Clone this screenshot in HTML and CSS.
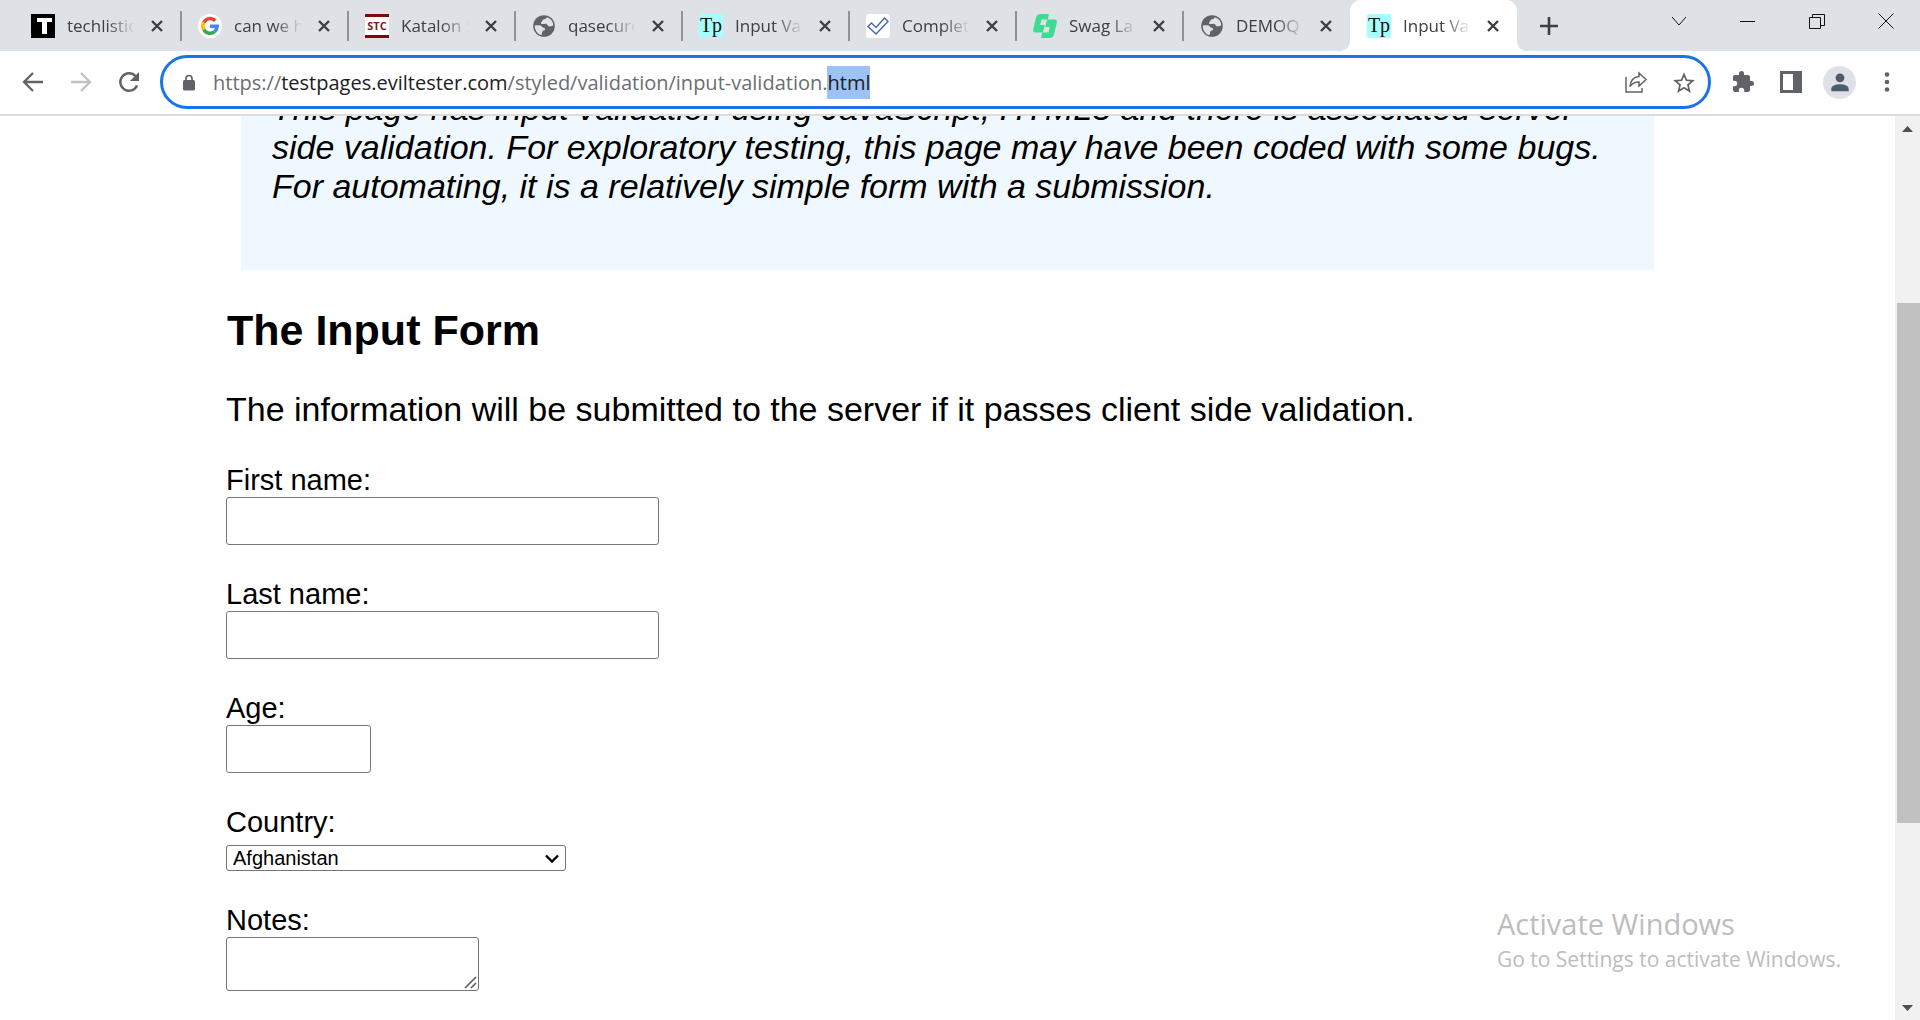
FILE: index.html
```html
<!DOCTYPE html>
<html lang="en">
<head>
<meta charset="utf-8">
<title>Input Validation</title>
<link rel="stylesheet" href="styles.css">
</head>
<body>
<svg class="defs" aria-hidden="true">
  <symbol id="x" viewBox="0 0 12 12"><path d="M1 1l10 10M11 1L1 11" fill="none" stroke="#3c4043" stroke-width="2.4"/></symbol>
  <symbol id="globe" viewBox="0 0 24 24"><circle cx="12" cy="12" r="10.8" fill="#5f6368"/><path d="M2.8 11.4C6 11 9.300 11 9.800 12.400c.5 1.500 3.300.8 3.400 2.700.1 1.800-2.900 1.300-3.100 3.300-.1 1.200-.2 1.900-.6 2.700C5.500 20.200 2.600 16.300 2.800 11.400zM14.700 3.200c-.3 1.700-1.400 1.700-2.900 2-1.500.4-1.300 1.900-2.300 2.800-1 .8-.5 2.200 1 2.100 1.700-.1 2.700-.9 4-.1 1.200.8 1.600 2.600 3.500 2.500 1.300-.1 2-.9 3.200-.9.3-4-2.600-7.300-6.500-8.400z" fill="#dee1e6"/></symbol>
</svg>

<header class="browser">
  <div class="tabstrip">
    <nav class="tabs" aria-label="Tabs">
      <div class="tab"><svg class="fav" viewBox="0 0 24 24"><path fill="#000" d="M0 0h24v24H0z"/><path fill="#fff" d="M6 4h15v4h-5v12h-5V8H6z"/></svg><a href="#" class="tab-title">techlistic</a><button class="close" aria-label="Close tab"><svg><use href="#x"/></svg></button></div>
      <div class="tab"><svg class="fav" viewBox="0 0 24 24"><circle cx="12" cy="12" r="12" fill="#fff"/><g fill="none" stroke-width="3.500"><path stroke="#ea4335" d="M17.300 6.700A7.200 7.200 0 0 0 5.800 8.400"/><path stroke="#fbbc05" d="M5.800 8.400a7.200 7.200 0 0 0 0 7.200"/><path stroke="#34a853" d="M5.800 15.600a7.200 7.200 0 0 0 10.900 2"/><path stroke="#4285f4" d="M16.700 17.600a7.200 7.200 0 0 0 2.500-5.300H12"/></g></svg><a href="#" class="tab-title">can we ha</a><button class="close" aria-label="Close tab"><svg><use href="#x"/></svg></button></div>
      <div class="tab"><span class="fav stc">STC</span><a href="#" class="tab-title">Katalon S</a><button class="close" aria-label="Close tab"><svg><use href="#x"/></svg></button></div>
      <div class="tab"><svg class="fav"><use href="#globe"/></svg><a href="#" class="tab-title">qasecure</a><button class="close" aria-label="Close tab"><svg><use href="#x"/></svg></button></div>
      <div class="tab"><span class="fav tp">Tp</span><a href="#" class="tab-title">Input Va</a><button class="close" aria-label="Close tab"><svg><use href="#x"/></svg></button></div>
      <div class="tab"><svg class="fav" viewBox="0 0 24 24"><rect width="24" height="24" rx="3" fill="#fff"/><path d="M2 12.500l3.500-3.500 4.500 4.500L18.500 4 22 7.500 10 20z" fill="none" stroke="#3f68b5" stroke-width="1.400"/></svg><a href="#" class="tab-title">Complet</a><button class="close" aria-label="Close tab"><svg><use href="#x"/></svg></button></div>
      <div class="tab"><svg class="fav" viewBox="0 0 24 24"><path fill="#3ddc91" d="M7.500 0H16l-1.300 5.500H8.500L7.200 11h4.500l-1 4.500-1.200 3H2.200Q-.5 18.500.2 15.500L3 3.500Q4 0 7.500 0zM16.500 24H8l1.300-5.500h6.200l1.300-5.500h-4.500l1-4.500 1.200-3h7.300q2.700 0 2 3L21 20.500Q20 24 16.500 24z"/></svg><a href="#" class="tab-title">Swag La</a><button class="close" aria-label="Close tab"><svg><use href="#x"/></svg></button></div>
      <div class="tab"><svg class="fav"><use href="#globe"/></svg><a href="#" class="tab-title">DEMOQ</a><button class="close" aria-label="Close tab"><svg><use href="#x"/></svg></button></div>
      <div class="tab active"><span class="fav tp">Tp</span><a href="#" class="tab-title">Input Va</a><button class="close" aria-label="Close tab"><svg><use href="#x"/></svg></button></div>
    </nav>
    <button class="newtab" aria-label="New tab"><svg viewBox="0 0 18 18"><path d="M9 0v18M0 9h18" stroke="#3c4043" stroke-width="2.600"/></svg></button>
    <div class="window-controls">
      <button aria-label="Search tabs"><svg viewBox="0 0 16 16"><path d="M1 4l7 8 7-8"/></svg></button>
      <button aria-label="Minimize"><svg viewBox="0 0 16 16"><path d="M0 8.500h15"/></svg></button>
      <button aria-label="Restore"><svg viewBox="0 0 16 16"><path d="M.5 4.500h11v11H.5zM3.500 4.500v-3h12v11h-4"/></svg></button>
      <button aria-label="Close"><svg viewBox="0 0 16 16"><path d="M.5.5l15 15M15.500.5l-15 15"/></svg></button>
    </div>
  </div>

  <div class="toolbar">
    <div class="nav-buttons">
      <button aria-label="Back"><svg viewBox="0 0 24 24"><path d="M22 12H3M12 3l-9 9 9 9" fill="none" stroke="#5f6368" stroke-width="2.300"/></svg></button>
      <button aria-label="Forward"><svg viewBox="0 0 24 24"><path d="M2 12h19M12 3l9 9-9 9" fill="none" stroke="#bdc1c6" stroke-width="2.300"/></svg></button>
      <button aria-label="Reload"><svg viewBox="0 0 24 24"><path d="M20 15.500A8.700 8.700 0 1 1 18.500 6.200" fill="none" stroke="#5f6368" stroke-width="2.400"/><path d="M22 2v9h-9z" fill="#5f6368"/></svg></button>
    </div>
    <div class="omnibox">
      <svg class="lock" viewBox="0 0 12 16"><rect y="5.500" width="12" height="10.500" rx="1.500" fill="#5f6368"/><path d="M3 6V4a3 3 0 0 1 6 0v2" fill="none" stroke="#5f6368" stroke-width="1.700"/></svg>
      <div class="url" role="textbox" contenteditable="true" spellcheck="false" aria-label="Address">https://<span class="host">testpages.eviltester.com</span>/styled/validation/input-validation.<span class="selected">html</span></div>
      <button aria-label="Share"><svg viewBox="0 0 24 24"><path d="M2 7v15h16v-4M15 3l7 6.500-7 6.500v-4c-4 0-7 1.500-9 4.500.5-5.500 3.500-9.500 9-10z" fill="none" stroke="#5f6368" stroke-width="1.500"/></svg></button>
      <button aria-label="Bookmark"><svg viewBox="1 0 22 22"><path fill="#5f6368" d="M22 9.240l-7.190-.62L12 2 9.190 8.630 2 9.240l5.460 4.730L5.820 21 12 17.270 18.180 21l-1.630-7.030L22 9.240zM12 15.400l-3.760 2.270 1-4.280-3.320-2.880 4.380-.38L12 6.100l1.710 4.040 4.380.38-3.320 2.880 1 4.280L12 15.400z"/></svg></button>
    </div>
    <div class="tools">
      <button aria-label="Extensions"><svg viewBox="0 0 24 24"><path fill="#5f6368" d="M20.500 11H19V7c0-1.100-.9-2-2-2h-4V3.500a2.500 2.500 0 0 0-5 0V5H4c-1.100 0-2 .9-2 2v3.800h1.500a2.700 2.700 0 0 1 0 5.400H2V20c0 1.100.9 2 2 2h3.800v-1.500a2.700 2.700 0 0 1 5.400 0V22H17c1.100 0 2-.9 2-2v-4h1.500a2.500 2.500 0 0 0 0-5z"/></svg></button>
      <button aria-label="Side panel"><svg viewBox="0 0 24 24"><path fill="#5f6368" fill-rule="evenodd" d="M1 1h22v22H1zM4 4v16h10V4z"/></svg></button>
      <button class="avatar" aria-label="Profile"><svg viewBox="0 0 24 24"><circle cx="12" cy="7.500" r="4.800" fill="#4f5b70"/><path d="M2.500 22v-2.500c0-3.500 5.500-5 9.500-5s9.500 1.500 9.500 5V22z" fill="#4f5b70"/></svg></button>
      <button aria-label="Menu"><svg viewBox="0 0 24 24"><g fill="#5f6368"><circle cx="12" cy="4.500" r="2.300"/><circle cx="12" cy="12" r="2.300"/><circle cx="12" cy="19.500" r="2.300"/></g></svg></button>
    </div>
  </div>
</header>

<div class="viewport">
  <main class="page">
    <p class="intro">This page has input validation using JavaScript, HTML5 and there is associated server side validation. For exploratory testing, this page may have been coded with some bugs. For automating, it is a relatively simple form with a submission.</p>
    <h2>The Input Form</h2>
    <p class="lead">The information will be submitted to the server if it passes client side validation.</p>
    <form>
      <div class="field"><label for="firstname">First name:</label><input type="text" id="firstname"></div>
      <div class="field"><label for="surname">Last name:</label><input type="text" id="surname"></div>
      <div class="field"><label for="age">Age:</label><input class="short" type="number" id="age"></div>
      <div class="field country"><label for="country">Country:</label>
        <div class="select"><select id="country"><option>Afghanistan</option></select><svg viewBox="0 0 14 9"><path d="M1 1.500l6 6 6-6" fill="none" stroke="#000" stroke-width="2.400"/></svg></div></div>
      <div class="field"><label for="notes">Notes:</label><textarea id="notes"></textarea></div>
    </form>
  </main>
  <div class="scrollbar" aria-hidden="true">
    <svg viewBox="0 0 25 25"><path d="M7 16l5.500-6L18 16z" fill="#505050"/></svg>
    <div class="thumb"></div>
    <svg class="down" viewBox="0 0 25 25"><path d="M7 10l5.500 6L18 10z" fill="#505050"/></svg>
  </div>
  <aside class="watermark"><strong>Activate Windows</strong><span>Go to Settings to activate Windows.</span></aside>
</div>
</body>
</html>
```
FILE: styles.css
```css
* { box-sizing: border-box; }

body {
  margin: 0;
  height: 100vh;
  display: flex;
  flex-direction: column;
  overflow: hidden;
  background: #fff;
  color: #000;
  font-family: "Liberation Sans", Arial, sans-serif;
}

.defs { display: none; }

button {
  display: flex;
  align-items: center;
  justify-content: center;
  padding: 0;
  border: 0;
  background: none;
  flex: none;
}

/* Tab strip */
.browser { flex: none; font-family: "Open Sans", "Segoe UI", sans-serif; }

.tabstrip {
  display: flex;
  height: 51px;
  padding-left: 14px;
  background: #dee1e6;
}

.tabs { display: flex; }

.tab {
  position: relative;
  display: flex;
  align-items: center;
  width: 167px;
  padding: 0 14px 0 17px;
  border-radius: 11px 11px 0 0;
}

.tab::after {
  content: "";
  position: absolute;
  right: -1px;
  top: 11px;
  width: 2px;
  height: 30px;
  background: #8f9296;
}

.tab:nth-last-child(2)::after { display: none; }

.tab.active { background: #fff; }

.tab.active::before,
.tab.active::after {
  content: "";
  position: absolute;
  top: auto;
  bottom: 0;
  width: 10px;
  height: 10px;
}

.tab.active::before { left: -10px; background: radial-gradient(circle at 0 0, #dee1e6 10px, #fff 10px); }
.tab.active::after { right: -10px; background: radial-gradient(circle at 100% 0, #dee1e6 10px, #fff 10px); }

.fav { flex: none; width: 24px; height: 24px; }

.stc {
  border-top: 3px solid #7d0a0a;
  border-bottom: 3px solid #7d0a0a;
  background: #fff;
  color: #7d1d26;
  font-size: 11px;
  font-weight: 700;
  line-height: 18px;
  text-align: center;
}

.tp {
  border-radius: 2px;
  background: #a6ffff;
  color: #111;
  font: 20px/22px "Liberation Serif", serif;
  text-align: center;
}

.tab-title {
  width: 68px;
  margin-left: 12px;
  overflow: hidden;
  color: #3c4043;
  font-size: 17px;
  line-height: 24px;
  text-decoration: none;
  white-space: nowrap;
  -webkit-mask-image: linear-gradient(90deg, #000 40px, transparent 68px);
  mask-image: linear-gradient(90deg, #000 40px, transparent 68px);
}

.close { width: 20px; height: 20px; margin-left: auto; }
.close svg { width: 12px; height: 12px; }

.newtab { width: 40px; margin-left: 12px; }
.newtab svg { width: 18px; height: 18px; }

.window-controls { display: flex; margin-left: auto; height: 42px; }
.window-controls button { width: 69px; }
.window-controls svg { width: 16px; height: 16px; fill: none; stroke: #111; }

/* Toolbar */
.toolbar {
  display: flex;
  align-items: center;
  height: 65px;
  padding-bottom: 1px;
  border-bottom: 2px solid #dcdcdc;
  background: #fff;
}

.nav-buttons { display: flex; padding: 0 7px 0 9px; }
.nav-buttons button { width: 48px; }
.nav-buttons svg { width: 24px; height: 24px; }

.omnibox {
  display: flex;
  align-items: center;
  flex: 1;
  height: 54px;
  padding: 0 0 0 20px;
  border: 3px solid #1a73e8;
  border-radius: 27px;
}

.omnibox button { width: 48px; }
.omnibox button svg { width: 24px; height: 24px; }
.lock { flex: none; width: 12px; height: 17px; }

.url {
  flex: 1;
  margin-left: 18px;
  color: #6b6e72;
  font-size: 20px;
  line-height: 33px;
  white-space: nowrap;
  outline: none;
}

.host { color: #202124; }
.selected { display: inline-block; background: #9cc2f6; color: #202124; }

.tools { display: flex; align-items: center; width: 209px; padding-left: 8px; }
.tools button { width: 48px; }
.tools svg { width: 24px; height: 24px; }
.tools .avatar { width: 33px; height: 33px; margin: 0 7px 0 8px; border-radius: 50%; background: #dee1e6; }
.tools .avatar svg { width: 22px; height: 22px; }

/* Page area, scrolled part of the way down */
.viewport {
  position: relative;
  display: flex;
  flex: 1;
  min-height: 0;
  overflow: hidden;
}

.page { flex: 1; margin-top: -27px; padding: 0 227px 0 226px; }

.intro {
  margin: 0 14px 0 15px;
  padding: 0 30px 64px 31px;
  background: #f0f8ff;
  font-size: 34px;
  font-style: italic;
  line-height: 39px;
}

h2 { margin: 35px 0; padding-left: 1px; font-size: 43px; line-height: 50px; }

.lead { margin: 0 0 34px; font-size: 34px; line-height: 39px; }

.field { display: flex; flex-direction: column; align-items: flex-start; margin-bottom: 32px; }

label { font-size: 29px; line-height: 34px; }

input,
textarea,
select {
  display: block;
  margin: 0;
  border: 1px solid #767676;
  border-radius: 3px;
  background: #fff;
  color: #000;
  font-family: inherit;
  font-size: 20px;
}

input { width: 433px; height: 48px; }
.short { width: 145px; }
textarea { width: 253px; height: 54px; }

textarea::-webkit-resizer {
  background: url("data:image/svg+xml,%3Csvg xmlns='http://www.w3.org/2000/svg' width='15' height='15'%3E%3Cpath d='M2 13L13 2M8 13l5-5' stroke='%23555' stroke-width='1.500'/%3E%3C/svg%3E") no-repeat;
}

.select { position: relative; margin-top: 6px; }
select { width: 340px; height: 26px; padding: 0 6px; appearance: none; line-height: 24px; }
.select svg { position: absolute; right: 7px; top: 9px; width: 14px; height: 9px; pointer-events: none; }

.scrollbar {
  display: grid;
  grid-template-rows: 25px 162fr 520fr 172fr 25px;
  flex: none;
  width: 25px;
  padding: 0 2px;
  background: #f1f1f1;
}

.scrollbar svg { width: 25px; height: 25px; margin-left: -2px; }
.thumb { grid-row: 3; background: #c1c1c1; }
.down { grid-row: 5; }

.watermark {
  position: absolute;
  right: 79px;
  bottom: 45px;
  display: flex;
  flex-direction: column;
  color: #bdbdbd;
  font-family: "Open Sans", "Segoe UI", sans-serif;
  font-size: 21px;
  line-height: 32px;
}

.watermark strong { font-size: 29px; font-weight: 400; line-height: 38px; }
```
